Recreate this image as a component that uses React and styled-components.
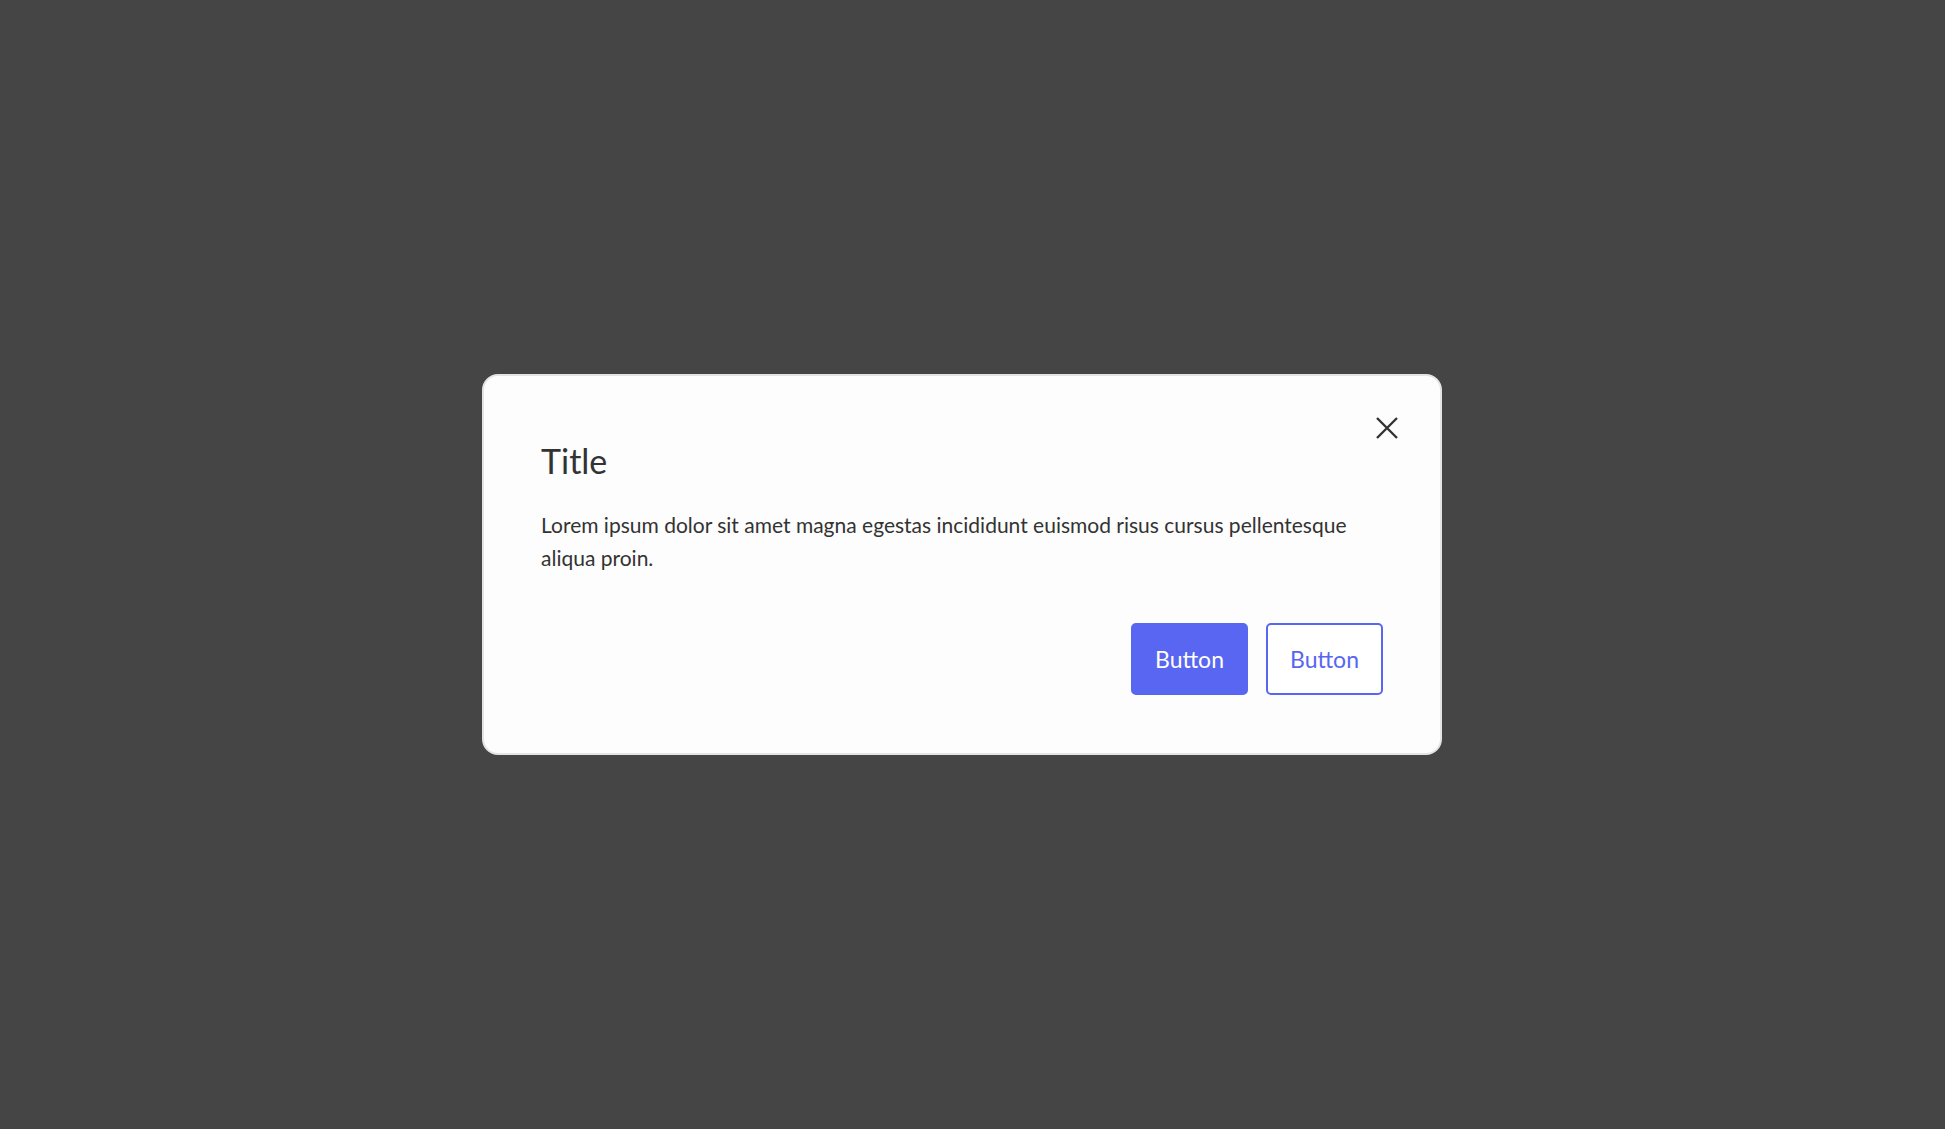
import React from "react";
import styled, { createGlobalStyle } from "styled-components";

const GlobalStyle = createGlobalStyle`
  html, body {
    margin: 0;
    padding: 0;
    background: #454545;
  }
  * {
    box-sizing: border-box;
  }
`;

const Overlay = styled.div`
  width: 100vw;
  height: 100vh;
  display: flex;
  align-items: center;
  justify-content: center;
  padding-right: 21px;
  background-color: #454545;
`;

const Dialog = styled.div`
  position: relative;
  width: 960px;
  padding: 64px 57px 58px 57px;
  background-color: #fdfdfd;
  border: 2px solid #e4e4e4;
  border-radius: 16px;
  font-family: Lato, "Liberation Sans", sans-serif;
  color: #333333;
`;

const CloseButton = styled.button`
  position: absolute;
  top: 32px;
  right: 33px;
  width: 40px;
  height: 40px;
  padding: 0;
  border: none;
  background: transparent;
  display: flex;
  align-items: center;
  justify-content: center;
  cursor: pointer;
`;

const Title = styled.h2`
  margin: 0;
  font-size: 34px;
  line-height: 42px;
  font-weight: 400;
`;

const Body = styled.p`
  margin: 26px 0 0 0;
  font-size: 21px;
  line-height: 33px;
`;

const Actions = styled.div`
  display: flex;
  justify-content: flex-end;
  gap: 18px;
  margin-top: 49px;
`;

const Button = styled.button`
  width: 117px;
  height: 72px;
  border-radius: 5px;
  font-family: inherit;
  font-size: 23px;
  cursor: pointer;
  border: 2px solid #5866f1;
  background-color: ${props => (props.outline ? "#ffffff" : "#5866f1")};
  color: ${props => (props.outline ? "#5866f1" : "#ffffff")};
`;

const CloseIcon = () => (
  <svg width="22" height="22" viewBox="0 0 22 22">
    <path
      d="M1 1L21 21M21 1L1 21"
      stroke="#333333"
      strokeWidth="2.4"
      fill="none"
    />
  </svg>
);

const App = () => {
  return (
    <>
      <GlobalStyle />
      <Overlay>
        <Dialog>
          <CloseButton aria-label="Close">
            <CloseIcon />
          </CloseButton>
          <Title>Title</Title>
          <Body>
            Lorem ipsum dolor sit amet magna egestas incididunt euismod risus
            cursus pellentesque aliqua proin.
          </Body>
          <Actions>
            <Button>Button</Button>
            <Button outline>Button</Button>
          </Actions>
        </Dialog>
      </Overlay>
    </>
  );
};

export default App;
